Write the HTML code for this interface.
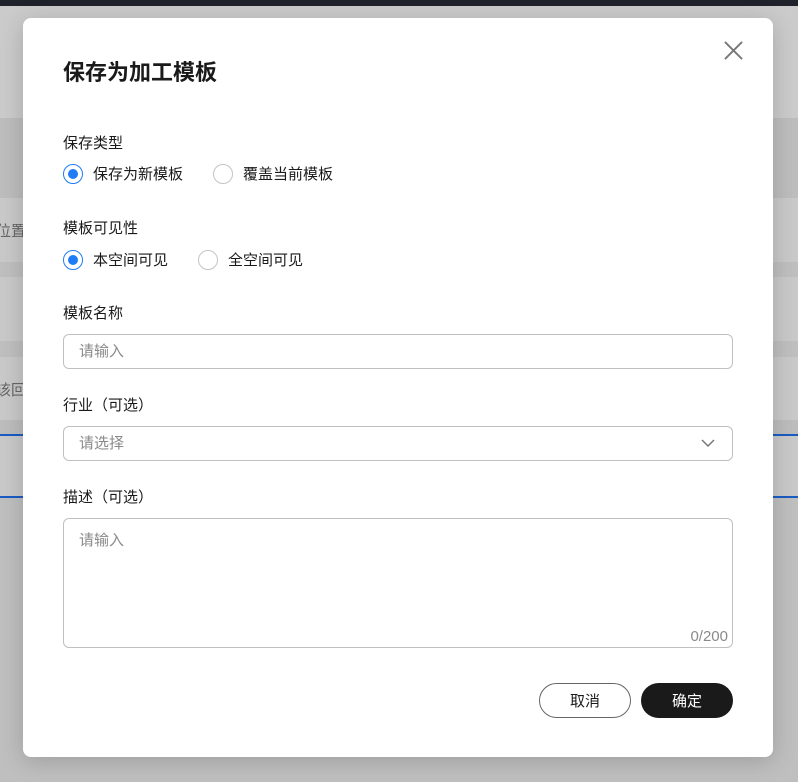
<!DOCTYPE html>
<html><head><meta charset="utf-8"><style>
*{box-sizing:border-box;margin:0;padding:0}
body{width:798px;height:782px;overflow:hidden;background:#c9c9c9;font-family:"Liberation Sans","Noto Sans CJK SC",sans-serif;position:relative}
.b{position:absolute;left:0;width:798px}
.dlg{position:absolute;left:23px;top:18px;width:750px;height:739px;background:#fff;border-radius:8px;box-shadow:0 4px 24px rgba(0,0,0,.18)}
.t{position:absolute;left:40px;top:36px;font-size:22px;font-weight:bold;color:#1a1a1a}
.lbl{position:absolute;left:40px;font-size:15px;color:#1a1a1a}
.r{position:absolute;font-size:15px;color:#1a1a1a;display:flex;align-items:center}
.r i{display:inline-block;width:20px;height:20px;border:1px solid #c4c4c4;border-radius:50%;margin-right:10px;position:relative}
.r i.on{border-color:#1f7cf5}
.r i.on:after{content:"";position:absolute;left:4px;top:4px;width:10px;height:10px;border-radius:50%;background:#1f7cf5}
.inp{position:absolute;left:40px;width:670px;border:1px solid #c0c0c0;border-radius:6px;font-size:15px;color:#8a8a8a;padding-left:15px}
.btn{position:absolute;top:665px;width:92px;height:35px;border-radius:18px;font-size:15px;display:flex;align-items:center;justify-content:center}
</style></head><body>
<div class="b" style="top:0;height:6px;background:#1f222a"></div>
<div class="b" style="top:6px;height:112px;background:#cbcbcb"></div>
<div class="b" style="top:118px;height:80px;background:#bdbdbd"></div>
<div class="b" style="top:262px;height:15px;background:#bfbfbf"></div>
<div class="b" style="top:341px;height:16px;background:#bfbfbf"></div>
<div class="b" style="top:420px;height:15px;background:#bdbdbd"></div>
<div class="b" style="top:434px;height:2px;background:#1a5cc4"></div>
<div class="b" style="top:496px;height:2px;background:#1a5cc4"></div>
<div class="b" style="top:498px;height:284px;background:#bfbfbf"></div>
<div style="position:absolute;left:-4px;top:220px;font-size:15px;color:#666">位置</div>
<div style="position:absolute;left:-4px;top:379px;font-size:15px;color:#666">该回</div>
<div class="dlg">
<div class="t" style="top:37px">保存为加工模板</div>
<svg style="position:absolute;left:701px;top:23px" width="19" height="19" viewBox="0 0 20 20"><path d="M1 1L19 19M19 1L1 19" stroke="#777" stroke-width="2"/></svg>
<div class="lbl" style="top:114px">保存类型</div>
<div class="r" style="left:40px;top:145px"><i class="on"></i>保存为新模板</div>
<div class="r" style="left:190px;top:145px"><i></i>覆盖当前模板</div>
<div class="lbl" style="top:199px">模板可见性</div>
<div class="r" style="left:40px;top:231px"><i class="on"></i>本空间可见</div>
<div class="r" style="left:175px;top:231px"><i></i>全空间可见</div>
<div class="lbl" style="top:284px">模板名称</div>
<div class="inp" style="top:316px;height:35px;line-height:33px">请输入</div>
<div class="lbl" style="top:376px">行业（可选）</div>
<div class="inp" style="top:408px;height:35px;line-height:33px">请选择
<svg style="position:absolute;right:17px;top:12px" width="14" height="9" viewBox="0 0 14 9"><path d="M1 1L7 7L13 1" stroke="#777" stroke-width="1.5" fill="none"/></svg></div>
<div class="lbl" style="top:468px">描述（可选）</div>
<div class="inp" style="top:500px;height:130px;padding-top:10px">请输入
<span style="position:absolute;right:4px;bottom:2px;color:#8a8a8a">0/200</span></div>
<div class="btn" style="left:516px;border:1px solid #666;color:#1a1a1a">取消</div>
<div class="btn" style="left:618px;background:#1a1a1a;color:#fff">确定</div>
</div>
</body></html>
